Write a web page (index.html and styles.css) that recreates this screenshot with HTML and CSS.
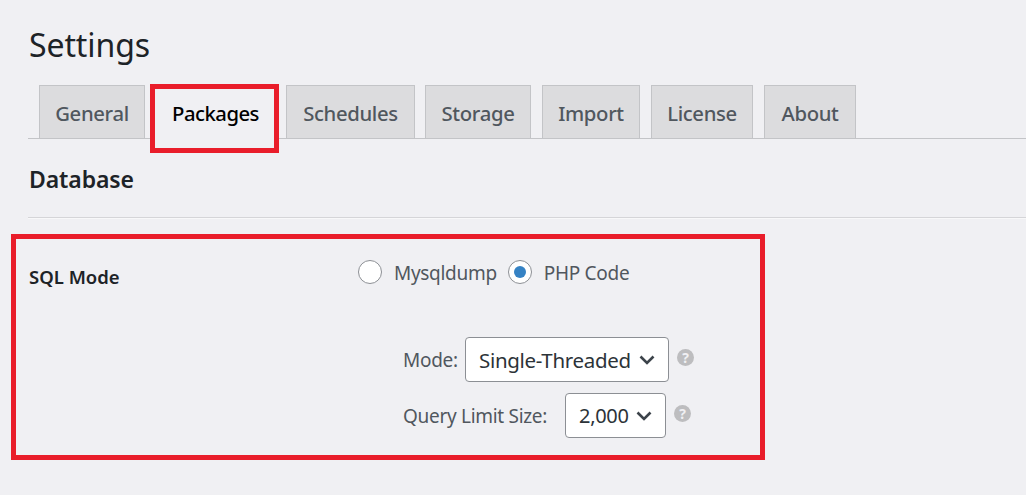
FILE: index.html
```html
<!DOCTYPE html>
<html lang="en">
<head>
    <meta charset="UTF-8">
    <title>Settings</title>
    <link rel="stylesheet" href="styles.css">
</head>
<body>
    <div class="wrap">
        <h1>Settings</h1>

        <div class="tabs">
            <a class="tab tab-general">General</a>
            <a class="tab tab-packages active">Packages</a>
            <a class="tab tab-schedules">Schedules</a>
            <a class="tab tab-storage">Storage</a>
            <a class="tab tab-import">Import</a>
            <a class="tab tab-license">License</a>
            <a class="tab tab-about">About</a>
        </div>

        <h2>Database</h2>
        <hr class="divider">

        <div class="form-row">
            <div class="form-label">SQL Mode</div>
            <div class="form-field">
                <div class="radios">
                    <label class="radio-item"><input type="radio" name="sql-mode"><span>Mysqldump</span></label>
                    <label class="radio-item"><input type="radio" name="sql-mode" checked><span>PHP Code</span></label>
                </div>
                <div class="options">
                    <div class="option option-mode">
                        <span class="option-label">Mode:</span>
                        <div class="select select-mode">
                            <span>Single-Threaded</span>
                            <svg class="chevron" viewBox="0 0 16 10" width="16" height="10"><path d="M1.5 1.5 8 8l6.5-6.5" fill="none" stroke="#3c434a" stroke-width="2.6"/></svg>
                        </div>
                        <span class="help">?</span>
                    </div>
                    <div class="option option-limit">
                        <span class="option-label">Query Limit Size:</span>
                        <div class="select select-limit">
                            <span>2,000</span>
                            <svg class="chevron" viewBox="0 0 16 10" width="16" height="10"><path d="M1.5 1.5 8 8l6.5-6.5" fill="none" stroke="#3c434a" stroke-width="2.6"/></svg>
                        </div>
                        <span class="help">?</span>
                    </div>
                </div>
            </div>
        </div>
    </div>

    <!-- red highlight boxes drawn on top of the page -->
    <div class="mark mark-tab"></div>
    <div class="mark mark-form"></div>
</body>
</html>
```

FILE: styles.css
```css
html, body {
    height: 100%;
}
body {
    margin: 0;
    background-color: #f0f0f3;
    color: #1d2327;
    font-family: "Noto Sans", "Open Sans", sans-serif;
    overflow: hidden;
    position: relative;
}
.wrap {
    padding: 22px 0 0 28px;
}
h1 {
    margin: 0 0 0 1px;
    font-size: 32px;
    font-weight: 400;
    line-height: 46px;
    letter-spacing: -0.1px;
}

/* tabs */
.tabs {
    display: flex;
    gap: 10px;
    margin-top: 17px;
    padding-left: 11px;
    height: 53px;
    border-bottom: 1px solid #c3c4c7;
}
.tab {
    box-sizing: border-box;
    height: 53px;
    border: 1px solid #c3c4c7;
    border-bottom: none;
    background-color: #dcdcde;
    color: #50575e;
    font-size: 20.3px;
    font-weight: 500;
    line-height: 54px;
    text-align: center;
    letter-spacing: -0.35px;
}
.tab-general { width: 106px; }
.tab-packages { width: 121px; }
.tab-schedules { width: 129px; }
.tab-storage { width: 106px; }
.tab-import { width: 98px; margin-left: 1px; }
.tab-license { width: 102px; margin-left: 1px; }
.tab-about { width: 92px; margin-left: 1px; }
.tab.active {
    height: 54px;
    background-color: #f0f0f3;
    border-color: #f0f0f3;
    color: #000;
    letter-spacing: -0.5px;
}

h2 {
    margin: 22px 0 0;
    padding-left: 1px;
    font-size: 23px;
    font-weight: 600;
    line-height: 36px;
    letter-spacing: -0.1px;
}
.divider {
    margin: 20px 0 0;
    border: none;
    border-top: 1px solid #d5d5d8;
    border-bottom: 1px solid #f8f8f9;
}

/* form */
.form-row {
    display: flex;
    margin-top: 40px;
}
.form-label {
    width: 330px;
    padding-left: 1px;
    box-sizing: border-box;
    margin-top: 4px;
    font-size: 18.5px;
    font-weight: 600;
    line-height: 28px;
    letter-spacing: 0;
}
.form-field {
    color: #50575e;
    font-size: 19px;
    letter-spacing: -0.3px;
}
.radios {
    display: flex;
    gap: 11px;
    height: 28px;
}
.radio-item {
    display: flex;
    align-items: center;
    gap: 12px;
    line-height: 28px;
}
.radio-item input {
    appearance: none;
    box-sizing: border-box;
    width: 24px;
    height: 24px;
    margin: -3px 0 0;
    border: 1px solid #8c8f94;
    border-radius: 50%;
    background-color: #fff;
    display: flex;
    align-items: center;
    justify-content: center;
}
.radio-item input:checked::before {
    content: "";
    width: 12px;
    height: 12px;
    border-radius: 50%;
    background-color: #3582c4;
}
.options {
    margin: 50px 0 0 45px;
}
.option {
    display: flex;
    align-items: center;
    height: 45px;
}
.option-limit {
    margin-top: 11px;
}
.option-mode .option-label { width: 62px; }
.option-limit .option-label { width: 162px; }
.select {
    box-sizing: border-box;
    height: 45px;
    display: flex;
    align-items: center;
    justify-content: space-between;
    padding: 0 13px 0 13px;
    border: 1px solid #8c8f94;
    border-radius: 4px;
    background-color: #fff;
    color: #2c3338;
    font-size: 20.5px;
}
.select-mode { width: 204px; }
.select-limit { width: 101px; font-size: 20px; }
.chevron {
    flex: none;
}
.help {
    width: 17px;
    height: 17px;
    margin: -4px 0 0 8px;
    border-radius: 50%;
    background-color: #bdbdbf;
    color: #f0f0f3;
    font-size: 14px;
    font-weight: 700;
    line-height: 17px;
    text-align: center;
    letter-spacing: 0;
}

/* red highlight boxes */
.mark {
    position: absolute;
    box-sizing: border-box;
    border: 5px solid #e91d2a;
}
.mark-tab {
    left: 150px;
    top: 84px;
    width: 129px;
    height: 69px;
}
.mark-form {
    left: 11px;
    top: 234px;
    width: 754px;
    height: 226px;
}
```
